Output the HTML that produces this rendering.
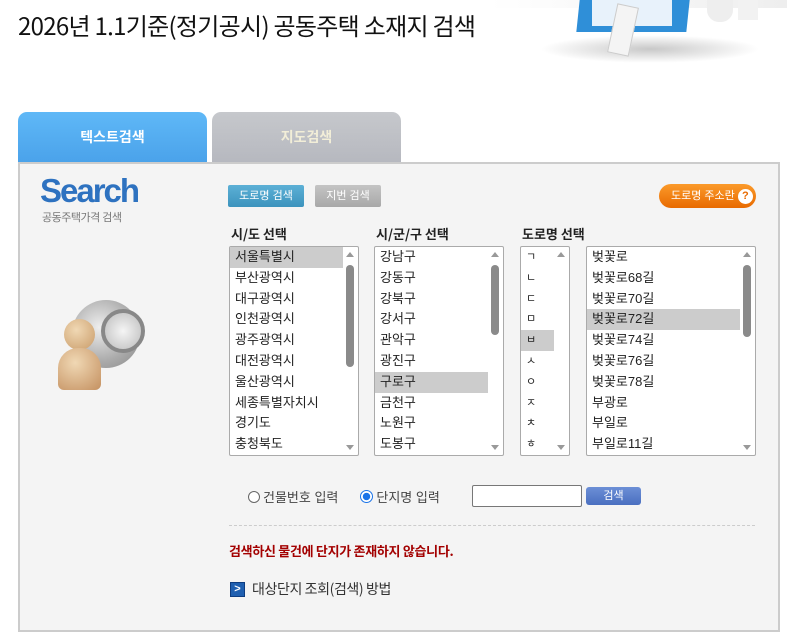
<!DOCTYPE html>
<html><head><meta charset="utf-8"><style>
*{margin:0;padding:0;box-sizing:border-box}
body{width:787px;height:620px;overflow:hidden;background:#fff;font-family:"Liberation Sans","Noto Sans CJK KR",sans-serif;position:relative;color:#222}
.abs{position:absolute}
h1{position:absolute;left:18px;top:7px;font-size:24px;font-weight:normal;letter-spacing:-0.7px;color:#111;font-family:"Noto Sans CJK KR",sans-serif}
.tab{position:absolute;top:112px;width:189px;height:51px;border-radius:9px 9px 0 0;text-align:center;line-height:50px;font-size:14px;font-weight:bold;font-family:"Noto Sans CJK KR",sans-serif}
.panel{position:absolute;left:18px;top:162px;width:762px;height:470px;background:#f4f4f4;border:2px solid #ccc}
.lb{position:absolute;top:246px;height:210px;background:#fff;border:1px solid #aaa;border-radius:2px;overflow:hidden;font-size:13px}
.lb div.r{height:20.8px;line-height:20.8px;padding-left:5px;white-space:nowrap}
.sel{background:#ccc}
.sb{position:absolute;right:0;top:0;width:16px;height:100%}
.sb .up{position:absolute;left:4px;top:5px;border:4px solid transparent;border-bottom:5px solid #999;border-top:0}
.sb .dn{position:absolute;left:4px;bottom:5px;border:4px solid transparent;border-top:5px solid #999;border-bottom:0}
.sb .th{position:absolute;left:4px;width:8px;border-radius:4px;background:#8a8a8a}
.lbl{position:absolute;top:224px;font-size:13px;font-weight:bold;font-family:"Noto Sans CJK KR",sans-serif}
.btn{position:absolute;top:185px;height:22px;font-size:11px;line-height:22px;text-align:center;color:#fff;border-radius:2px}
</style></head><body>
<h1>2026년 1.1기준(정기공시) 공동주택 소재지 검색</h1>
<!-- header illustration -->
<div class="abs" style="left:490px;top:0;width:297px;height:8px;background:linear-gradient(90deg,#fff,#eee)"></div>
<div class="abs" style="left:540px;top:35px;width:220px;height:28px;border-radius:50%;background:radial-gradient(ellipse,#c8c8c8,rgba(255,255,255,0) 70%)"></div>
<div class="abs" style="left:578px;top:0;width:110px;height:32px;background:#2f8fd8;transform:skewX(-6deg)"></div>
<div class="abs" style="left:592px;top:0;width:80px;height:26px;background:#e8f2fb"></div>
<div class="abs" style="left:612px;top:5px;width:22px;height:50px;background:#f4f4f4;border:1px solid #ccc;transform:rotate(12deg)"></div>
<div class="abs" style="left:707px;top:0;width:26px;height:22px;background:#eee;border-radius:0 0 12px 12px"></div>
<div class="abs" style="left:738px;top:0;width:20px;height:20px;background:#f2f2f2"></div>

<div class="tab" style="left:18px;background:linear-gradient(#5fb8f7,#4aa2ea);color:#fff">텍스트검색</div>
<div class="tab" style="left:212px;background:linear-gradient(#c6c8cc,#b6b8bf);color:#f2eed8">지도검색</div>
<div class="panel"></div>

<div class="abs" style="left:40px;top:172px;font-size:33px;font-weight:bold;color:#2e72c0;letter-spacing:-2px;font-family:'Liberation Sans',sans-serif">Search</div>
<div class="abs" style="left:42px;top:209px;font-size:11px;color:#777;letter-spacing:-0.5px">공동주택가격 검색</div>
<!-- person/globe icon -->
<div class="abs" style="left:72px;top:300px;width:68px;height:68px;border-radius:50%;background:radial-gradient(circle at 40% 40%,#eee,#aaa 60%,#888)"></div>
<div class="abs" style="left:101px;top:309px;width:44px;height:44px;border-radius:50%;border:4px solid #888;background:radial-gradient(#f5f5f5,#bbb)"></div>
<div class="abs" style="left:64px;top:319px;width:31px;height:31px;border-radius:50%;background:radial-gradient(circle at 40% 35%,#f0d8b4,#c99b68)"></div>
<div class="abs" style="left:58px;top:348px;width:43px;height:42px;border-radius:20px 20px 6px 6px;background:radial-gradient(circle at 40% 35%,#f0d8b4,#c49060)"></div>

<div class="btn" style="left:228px;width:76px;background:linear-gradient(#5cb0d6,#3c93bd)">도로명 검색</div>
<div class="btn" style="left:315px;width:66px;background:linear-gradient(#c4c4c4,#a8a8a8)">지번 검색</div>
<div class="abs" style="left:659px;top:184px;width:97px;height:24px;border-radius:12px;background:linear-gradient(#fb9a2a,#e86a00);color:#fff;font-size:11px;line-height:24px;padding-left:12px">도로명 주소란 <span style="display:inline-block;width:15px;height:15px;border-radius:50%;background:#fff;color:#e86a00;font-weight:bold;text-align:center;line-height:15px;font-size:11px">?</span></div>

<div class="lbl" style="left:231px">시/도 선택</div>
<div class="lbl" style="left:376px">시/군/구 선택</div>
<div class="lbl" style="left:522px">도로명 선택</div>

<div class="lb" style="left:229px;width:130px">
<div class="r sel" style="width:113px">서울특별시</div><div class="r">부산광역시</div><div class="r">대구광역시</div><div class="r">인천광역시</div><div class="r">광주광역시</div><div class="r">대전광역시</div><div class="r">울산광역시</div><div class="r">세종특별자치시</div><div class="r">경기도</div><div class="r">충청북도</div>
<div class="sb"><div class="up"></div><div class="th" style="top:18px;height:102px"></div><div class="dn"></div></div></div>
<div class="lb" style="left:374px;width:130px">
<div class="r">강남구</div><div class="r">강동구</div><div class="r">강북구</div><div class="r">강서구</div><div class="r">관악구</div><div class="r">광진구</div><div class="r sel" style="width:113px">구로구</div><div class="r">금천구</div><div class="r">노원구</div><div class="r">도봉구</div>
<div class="sb"><div class="up"></div><div class="th" style="top:18px;height:70px"></div><div class="dn"></div></div></div>
<div class="lb" style="left:520px;width:50px;font-size:11px">
<div class="r">ㄱ</div><div class="r">ㄴ</div><div class="r">ㄷ</div><div class="r">ㅁ</div><div class="r sel" style="width:33px">ㅂ</div><div class="r">ㅅ</div><div class="r">ㅇ</div><div class="r">ㅈ</div><div class="r">ㅊ</div><div class="r">ㅎ</div>
<div class="sb"><div class="up"></div><div class="dn"></div></div></div>
<div class="lb" style="left:586px;width:170px">
<div class="r">벚꽃로</div><div class="r">벚꽃로68길</div><div class="r">벚꽃로70길</div><div class="r sel" style="width:153px">벚꽃로72길</div><div class="r">벚꽃로74길</div><div class="r">벚꽃로76길</div><div class="r">벚꽃로78길</div><div class="r">부광로</div><div class="r">부일로</div><div class="r">부일로11길</div>
<div class="sb"><div class="up"></div><div class="th" style="top:18px;height:72px"></div><div class="dn"></div></div></div>

<div class="abs" style="left:248px;top:487px;font-size:13px;color:#444;display:flex;align-items:center">
<span style="display:inline-block;width:12px;height:12px;border-radius:50%;border:1px solid #666;background:#fff;margin-right:3px"></span>건물번호 입력
<span style="display:inline-block;width:13px;height:13px;border-radius:50%;border:1px solid #1a73e8;background:radial-gradient(#1a73e8 45%,#fff 50%);margin:0 3px 0 22px"></span>단지명 입력</div>
<div class="abs" style="left:472px;top:485px;width:110px;height:22px;border:1px solid #777;background:#fff;border-radius:2px"></div>
<div class="abs" style="left:586px;top:487px;width:55px;height:18px;border-radius:3px;background:linear-gradient(#6c8fd6,#4a6fc0);color:#fff;font-size:11px;text-align:center;line-height:18px">검색</div>
<div class="abs" style="left:229px;top:525px;width:526px;border-top:1px dashed #ccc"></div>
<div class="abs" style="left:229px;top:541px;font-size:13px;font-weight:bold;color:#a30000;font-family:'Noto Sans CJK KR',sans-serif;letter-spacing:-0.3px">검색하신 물건에 단지가 존재하지 않습니다.</div>
<div class="abs" style="left:230px;top:582px;width:15px;height:15px;background:#1f5fb0;border:1px solid #0d3c80;color:#fff;font-size:11px;line-height:13px;text-align:center;font-weight:bold">&gt;</div>
<div class="abs" style="left:252px;top:579px;font-size:14px;color:#333;font-family:'Noto Sans CJK KR',sans-serif;letter-spacing:-0.4px">대상단지 조회(검색) 방법</div>
</body></html>
